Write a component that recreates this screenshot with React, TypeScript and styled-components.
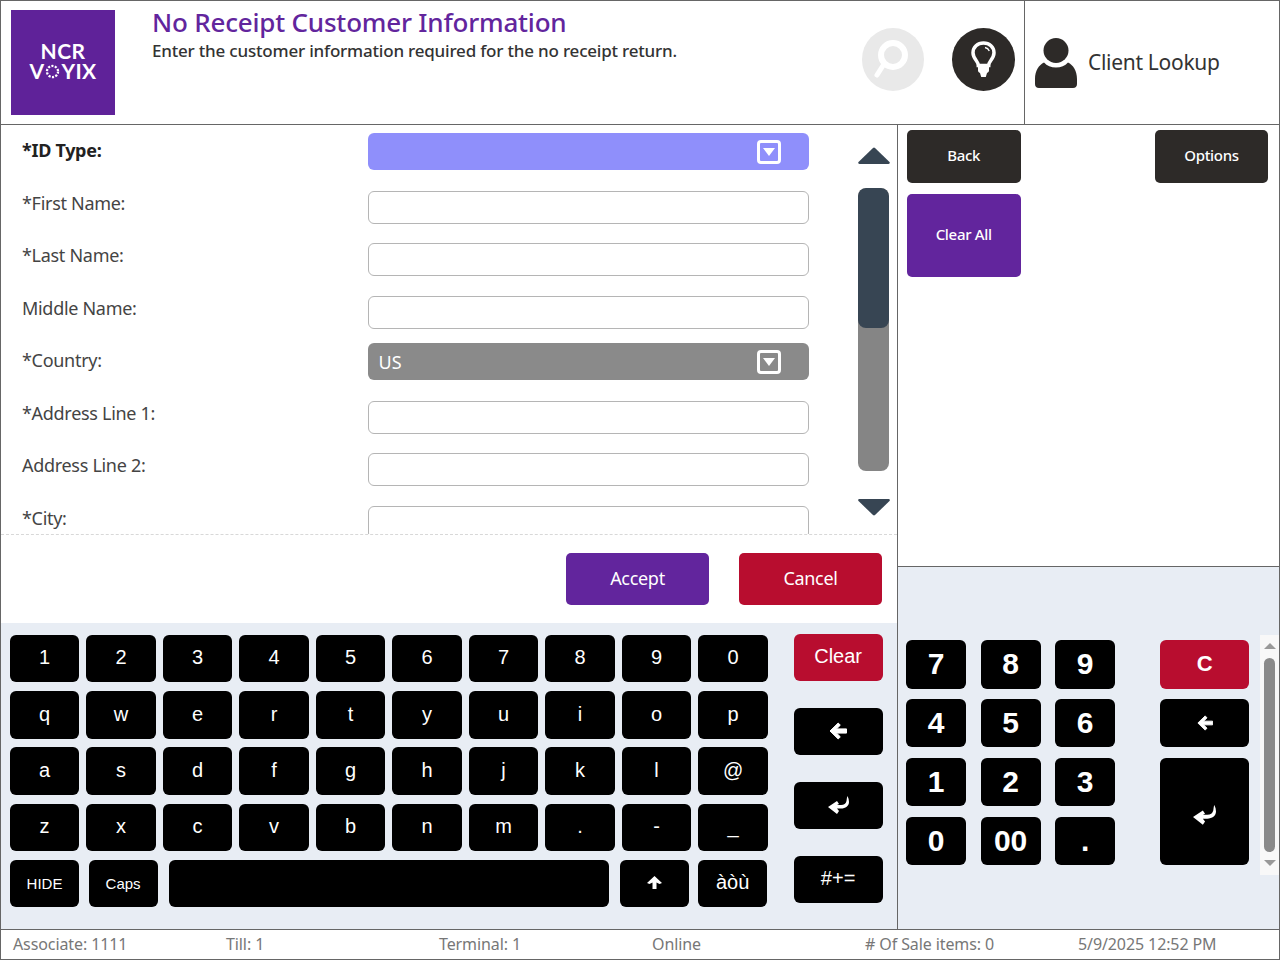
import React, { FC, ReactNode } from "react";
import styled, { createGlobalStyle } from "styled-components";

const GlobalStyle = createGlobalStyle`
  html, body { margin: 0; padding: 0; background: #fff; }
  * { box-sizing: border-box; }
  body { font-family: "Noto Sans", "Open Sans", sans-serif; }
`;

const PURPLE = "#62259d";
const RED = "#b80d2f";
const DARK = "#2d2a28";
const PANEL = "#e8edf4";
const LINE = "#666";

const Page = styled.div`
  width: 1280px;
  height: 960px;
  display: grid;
  grid-template-columns: 1fr;
  grid-template-rows: 124px 804px 30px;
  border: 1px solid ${LINE};
  overflow: hidden;
`;

/* header */
const Header = styled.header`
  display: grid;
  grid-template-columns: 1024px 1fr;
  border-bottom: 1px solid ${LINE};
`;

const HeaderMain = styled.div`
  display: flex;
  padding: 9px 0 0 10px;
  border-right: 1px solid ${LINE};
`;

const Logo = styled.div`
  width: 104px;
  height: 105px;
  padding-bottom: 3px;
  background: #5f2299;
  color: #fff;
  display: flex;
  flex-direction: column;
  align-items: center;
  justify-content: center;
  font-family: "Lato", sans-serif;
  font-weight: 700;
  font-size: 21px;
  line-height: 20px;
`;

const LogoLine = styled.div`
  display: flex;
  align-items: center;
  letter-spacing: 0.4px;
`;

const Titles = styled.div`
  width: 690px;
  margin: -2px 0 0 37px;
`;

const Title = styled.h1`
  margin: 0;
  color: ${PURPLE};
  font-size: 26px;
  line-height: 28px;
  font-weight: 500;
  letter-spacing: -0.2px;
`;

const Subtitle = styled.p`
  margin: 0;
  padding-top: 2px;
  color: #333;
  font-size: 17px;
  line-height: 26px;
  font-weight: 500;
  letter-spacing: -0.2px;
`;

const RoundIcons = styled.div`
  display: flex;
  gap: 28px;
  padding: 18px 0 0 20px;
`;

const RoundIcon = styled.div<{ $off?: boolean }>`
  width: ${(p) => (p.$off ? "62px" : "63px")};
  height: 62.5px;
  border-radius: 50%;
  background: ${(p) => (p.$off ? "#e9e9e9" : DARK)};
  display: flex;
  align-items: center;
  justify-content: center;
`;

const ClientLookup = styled.div`
  display: flex;
  align-items: center;
  gap: 11px;
  padding: 0 0 0 10px;
  color: #333;
  font-size: 21px;
  letter-spacing: -0.3px;
`;

const ClientName = styled.span`
  margin-bottom: 2px;
`;

/* body */
const Body = styled.main`
  display: grid;
  grid-template-columns: 897px 1fr;
  min-height: 0;
`;

const LeftColumn = styled.section`
  display: grid;
  grid-template-rows: 410px 88px 1fr;
  border-right: 1px solid ${LINE};
  min-height: 0;
`;

const FormArea = styled.div`
  display: flex;
  overflow: hidden;
  border-bottom: 1px dashed #d8d8d8;
  padding: 8px 0 0 21px;
`;

const FormRows = styled.div`
  width: 786.5px;
`;

const Row = styled.div`
  display: flex;
  height: 52.5px;
  align-items: flex-start;
`;

const Label = styled.label<{ $active?: boolean }>`
  width: 345.5px;
  color: ${(p) => (p.$active ? "#222" : "#444")};
  font-size: 18px;
  line-height: 35px;
  font-weight: ${(p) => (p.$active ? 700 : 400)};
  letter-spacing: -0.3px;
`;

const TextField = styled.div`
  width: 441px;
  height: 33px;
  margin-top: 5px;
  background: #fff;
  border: 1.5px solid #b5b5b5;
  border-radius: 6px;
`;

const Select = styled.div<{ $active?: boolean }>`
  width: 441px;
  height: 37px;
  padding: 0 28px 0 11px;
  display: flex;
  align-items: center;
  border-radius: 6px;
  background: ${(p) => (p.$active ? "#8f8ffb" : "#8a8a8a")};
  color: #fff;
  font-size: 18px;
`;

const SelectArrow = styled.span`
  width: 24px;
  height: 24px;
  margin-left: auto;
  border: 3px solid #fff;
  border-radius: 4px;
  display: flex;
  align-items: center;
  justify-content: center;
  &::after {
    content: "";
    margin-top: 1px;
    border-left: 6px solid transparent;
    border-right: 6px solid transparent;
    border-top: 8px solid #fff;
  }
`;

const Scroller = styled.div`
  width: 32px;
  margin-left: 49px;
  padding-top: 14px;
  display: flex;
  flex-direction: column;
  align-items: center;
`;

const ScrollTrack = styled.div`
  width: 31px;
  height: 283px;
  margin: 24px 0 28px;
  background: #858585;
  border-radius: 8px;
  overflow: hidden;
`;

const ScrollThumb = styled.div`
  height: 140px;
  background: #374553;
  border-radius: 8px;
`;

const Actions = styled.div`
  display: flex;
  justify-content: flex-end;
  gap: 30px;
  padding: 18px 15px 0 0;
`;

const ActionButton = styled.button<{ $bg: string }>`
  width: 143px;
  height: 52px;
  padding: 0 0 3px;
  border: 0;
  border-radius: 5px;
  background: ${(p) => p.$bg};
  color: #fff;
  font-family: inherit;
  font-size: 18px;
  letter-spacing: -0.3px;
`;

/* on-screen keyboard */
const KeyboardArea = styled.div`
  display: flex;
  background: ${PANEL};
  padding: 11.7px 0 0 9px;
  gap: 26px;
`;

const KeyGrid = styled.div`
  width: 757.6px;
`;

const KeyRow = styled.div`
  display: grid;
  grid-template-columns: repeat(10, 1fr);
  column-gap: 7.4px;
  margin-bottom: 8.7px;
`;

const LastKeyRow = styled.div`
  display: grid;
  grid-template-columns: 69px 69px 442.8px 69px 69px;
  column-gap: 9.6px;
`;

const Key = styled.button<{ $small?: boolean; $bg?: string }>`
  height: 47.6px;
  padding: 0 0 ${(p) => (p.$small ? "1px" : "1.5px")};
  border: 0;
  border-radius: 6px;
  background: ${(p) => p.$bg || "#000"};
  color: #fff;
  font-family: "Liberation Sans", Arial, sans-serif;
  font-size: ${(p) => (p.$small ? "15px" : "20px")};
  display: flex;
  align-items: center;
  justify-content: center;
`;

const SpaceKey = styled(Key)`
  margin: 0 1.4px;
`;

const SideKeys = styled.div`
  width: 89px;
  display: flex;
  flex-direction: column;
  gap: 26.4px;
  margin-top: -1px;
`;

/* right side */
const RightColumn = styled.section`
  display: grid;
  grid-template-rows: 442px 1fr;
  min-height: 0;
`;

const Functions = styled.div`
  display: grid;
  grid-template-columns: 113.5px 113px;
  grid-template-rows: 52.5px 83.5px;
  justify-content: space-between;
  row-gap: 11px;
  padding: 5px 11px 0 9px;
  border-bottom: 1px solid ${LINE};
`;

const FunctionButton = styled.button<{ $purple?: boolean }>`
  padding: 0 0 2px;
  border: 0;
  border-radius: 5px;
  background: ${(p) => (p.$purple ? PURPLE : DARK)};
  color: #fff;
  font-family: inherit;
  font-size: 15px;
  letter-spacing: -0.3px;
  font-weight: 500;
`;

const NumpadArea = styled.div`
  position: relative;
  background: ${PANEL};
  display: flex;
  padding: 73px 0 0 8px;
  gap: 45px;
`;

const NumGrid = styled.div`
  display: grid;
  grid-template-columns: 60px 60px 60px;
  grid-auto-rows: 48.6px;
  column-gap: 14.6px;
  row-gap: 10.3px;
`;

const NumKey = styled.button`
  border: 0;
  border-radius: 6px;
  background: #000;
  color: #fff;
  font-family: "Liberation Sans", Arial, sans-serif;
  font-weight: 700;
  font-size: 30px;
  padding: 0;
`;

const NumSide = styled.div`
  display: grid;
  grid-template-columns: 89px;
  grid-template-rows: 48.6px 48.6px 1fr;
  row-gap: 10.3px;
  height: 225px;
`;

const NumSideKey = styled(NumKey)<{ $red?: boolean }>`
  background: ${(p) => (p.$red ? RED : "#000")};
  font-size: 22px;
  display: flex;
  align-items: center;
  justify-content: center;
`;

const NumEnterKey = styled(NumSideKey)`
  padding-top: 7px;
`;

const NumScroll = styled.div`
  position: absolute;
  top: 68px;
  right: 0;
  width: 19px;
  height: 240px;
  background: #f8f8f8;
  display: flex;
  flex-direction: column;
  align-items: center;
  justify-content: space-between;
  padding: 8px 0 9px;
`;

const NumThumb = styled.div`
  width: 11px;
  height: 194px;
  background: #8a8a8a;
  border-radius: 6px;
`;

const NumArrow = styled.span<{ $down?: boolean }>`
  border-left: 6px solid transparent;
  border-right: 6px solid transparent;
  ${(p) => (p.$down ? "border-top" : "border-bottom")}: 6px solid #999;
`;

/* status bar */
const StatusBar = styled.footer`
  display: grid;
  grid-template-columns: repeat(5, 213px) 1fr;
  padding: 0 0 1px 12px;
  border-top: 1px solid ${LINE};
  align-items: center;
  color: #777;
  font-size: 16px;
  letter-spacing: -0.1px;
`;

/* drawings */
const VoyixRing: FC = () => (
  <svg width="15" height="15" viewBox="0 0 17 17" style={{ margin: "0 1px" }}>
    <circle cx="8.5" cy="8.5" r="6.3" fill="none" stroke="#fff" strokeWidth="2.6" strokeDasharray="2.4 1.55" />
  </svg>
);

const SearchGlyph: FC = () => (
  <svg width="44" height="44" viewBox="0 0 44 44" fill="none" stroke="#fff">
    <circle cx="22" cy="18" r="12" strokeWidth="6" />
    <path d="M13 27 L6 38" strokeWidth="5" strokeLinecap="round" />
  </svg>
);

const BulbGlyph: FC = () => (
  <svg width="25" height="36" viewBox="0 0 25 36">
    <path
      d="M12.500 2C6.500 2 2 6.300 2 11.800c0 3.800 1.800 6 3.500 8.200 1.200 1.600 1.800 2.800 1.800 4.500h10.400c0-1.700.6-2.900 1.800-4.500 1.700-2.200 3.500-4.400 3.500-8.200C23 6.300 18.500 2 12.500 2z"
      fill="none"
      stroke="#fff"
      strokeWidth="3.500"
    />
    <path d="M7 23.500h11v6c0 1.200-.8 2-2 2.400L14.800 36h-4.600L9 31.900c-1.200-.4-2-1.200-2-2.400z" fill="#fff" />
    <path d="M14 6.500c2 .4 3.500 1.500 4.300 3.500" fill="none" stroke="#fff" strokeWidth="1.300" />
  </svg>
);

const PersonGlyph: FC = () => (
  <svg width="42" height="50" viewBox="0 0 42 50" fill={DARK}>
    <circle cx="21" cy="12.500" r="12.500" />
    <path d="M9 24.500c3 3.500 7 5 12 5s9-1.500 12-5c5 2.500 9 8 9 16.500v5c0 2.500-1.500 4-4 4H4c-2.500 0-4-1.500-4-4v-5c0-8.500 4-14 9-16.500z" />
  </svg>
);

const ArrowBack: FC<{ size: number }> = ({ size }) => (
  <svg width={size} height={size} viewBox="0 0 18 18" fill="#fff">
    <path d="M9.200 1 11.300 3.200 7.500 6.900H17.500V11.100H7.500L11.300 14.800 9.200 17 1 9z" strokeLinejoin="round" stroke="#fff" strokeWidth="1" />
  </svg>
);

const ArrowUp: FC = () => (
  <svg width="15" height="13" viewBox="0 0 15 13" fill="#fff">
    <path d="M7.500 0 15 7 12.500 8 9.500 6.500V13H5.500V6.500L2.500 8 0 7z" />
  </svg>
);

const EnterGlyph: FC<{ size: number }> = ({ size }) => (
  <svg width={size} height={(size * 18) / 21} viewBox="0 0 21 18" fill="#fff">
    <path d="M19.500 0C20.500 2 21 4 21 6c0 4-3.500 6.500-8 6.500H9l2 2.500-2 3L0 11l9-6 2 3-2 1h4c3 0 5-1.500 5.500-4 .3-1.500.3-3.500 1-5z" />
  </svg>
);

const Triangle: FC<{ down?: boolean }> = ({ down }) => (
  <svg width="32" height="17" viewBox="0 0 32 17" fill="#374553" style={down ? { transform: "rotate(180deg)" } : undefined}>
    <path d="M15 1a1.500 1.500 0 0 1 2 0L31.500 15c.6.7.3 2-1 2H1.500c-1.300 0-1.600-1.300-1-2z" />
  </svg>
);

const rows: { label: string; select?: string; active?: boolean }[] = [
  { label: "*ID Type:", select: "", active: true },
  { label: "*First Name:" },
  { label: "*Last Name:" },
  { label: "Middle Name:" },
  { label: "*Country:", select: "US" },
  { label: "*Address Line 1:" },
  { label: "Address Line 2:" },
  { label: "*City:" },
];

const keyRows = ["1234567890", "qwertyuiop", "asdfghjkl@", "zxcvbnm.-_"];
const numKeys = ["7", "8", "9", "4", "5", "6", "1", "2", "3", "0", "00", "."];
const status = ["Associate: 1111", "Till: 1", "Terminal: 1", "Online", "# Of Sale items: 0", "5/9/2025 12:52 PM"];

const SideKey: FC<{ bg?: string; children: ReactNode }> = ({ bg, children }) => (
  <Key $bg={bg}>{children}</Key>
);

const App: FC = () => (
  <>
    <GlobalStyle />
    <Page>
      <Header>
        <HeaderMain>
          <Logo>
            <LogoLine>NCR</LogoLine>
            <LogoLine>
              V
              <VoyixRing />
              YIX
            </LogoLine>
          </Logo>
          <Titles>
            <Title>No Receipt Customer Information</Title>
            <Subtitle>Enter the customer information required for the no receipt return.</Subtitle>
          </Titles>
          <RoundIcons>
            <RoundIcon $off>
              <SearchGlyph />
            </RoundIcon>
            <RoundIcon>
              <BulbGlyph />
            </RoundIcon>
          </RoundIcons>
        </HeaderMain>
        <ClientLookup>
          <PersonGlyph />
          <ClientName>Client Lookup</ClientName>
        </ClientLookup>
      </Header>

      <Body>
        <LeftColumn>
          <FormArea>
            <FormRows>
              {rows.map((row) => (
                <Row key={row.label}>
                  <Label $active={row.active}>{row.label}</Label>
                  {row.select !== undefined ? (
                    <Select $active={row.active}>
                      {row.select}
                      <SelectArrow />
                    </Select>
                  ) : (
                    <TextField />
                  )}
                </Row>
              ))}
            </FormRows>
            <Scroller>
              <Triangle />
              <ScrollTrack>
                <ScrollThumb />
              </ScrollTrack>
              <Triangle down />
            </Scroller>
          </FormArea>

          <Actions>
            <ActionButton $bg={PURPLE}>Accept</ActionButton>
            <ActionButton $bg={RED}>Cancel</ActionButton>
          </Actions>

          <KeyboardArea>
            <KeyGrid>
              {keyRows.map((keys) => (
                <KeyRow key={keys}>
                  {keys.split("").map((k) => (
                    <Key key={k}>{k}</Key>
                  ))}
                </KeyRow>
              ))}
              <LastKeyRow>
                <Key $small>HIDE</Key>
                <Key $small>Caps</Key>
                <SpaceKey />
                <Key>
                  <ArrowUp />
                </Key>
                <Key>àòù</Key>
              </LastKeyRow>
            </KeyGrid>
            <SideKeys>
              <SideKey bg={RED}>Clear</SideKey>
              <SideKey>
                <ArrowBack size={18} />
              </SideKey>
              <SideKey>
                <EnterGlyph size={21} />
              </SideKey>
              <SideKey>#+=</SideKey>
            </SideKeys>
          </KeyboardArea>
        </LeftColumn>

        <RightColumn>
          <Functions>
            <FunctionButton>Back</FunctionButton>
            <FunctionButton>Options</FunctionButton>
            <FunctionButton $purple>Clear All</FunctionButton>
          </Functions>
          <NumpadArea>
            <NumGrid>
              {numKeys.map((k) => (
                <NumKey key={k}>{k}</NumKey>
              ))}
            </NumGrid>
            <NumSide>
              <NumSideKey $red>C</NumSideKey>
              <NumSideKey>
                <ArrowBack size={16} />
              </NumSideKey>
              <NumEnterKey>
                <EnterGlyph size={23} />
              </NumEnterKey>
            </NumSide>
            <NumScroll>
              <NumArrow />
              <NumThumb />
              <NumArrow $down />
            </NumScroll>
          </NumpadArea>
        </RightColumn>
      </Body>

      <StatusBar>
        {status.map((s) => (
          <span key={s}>{s}</span>
        ))}
      </StatusBar>
    </Page>
  </>
);

export default App;
